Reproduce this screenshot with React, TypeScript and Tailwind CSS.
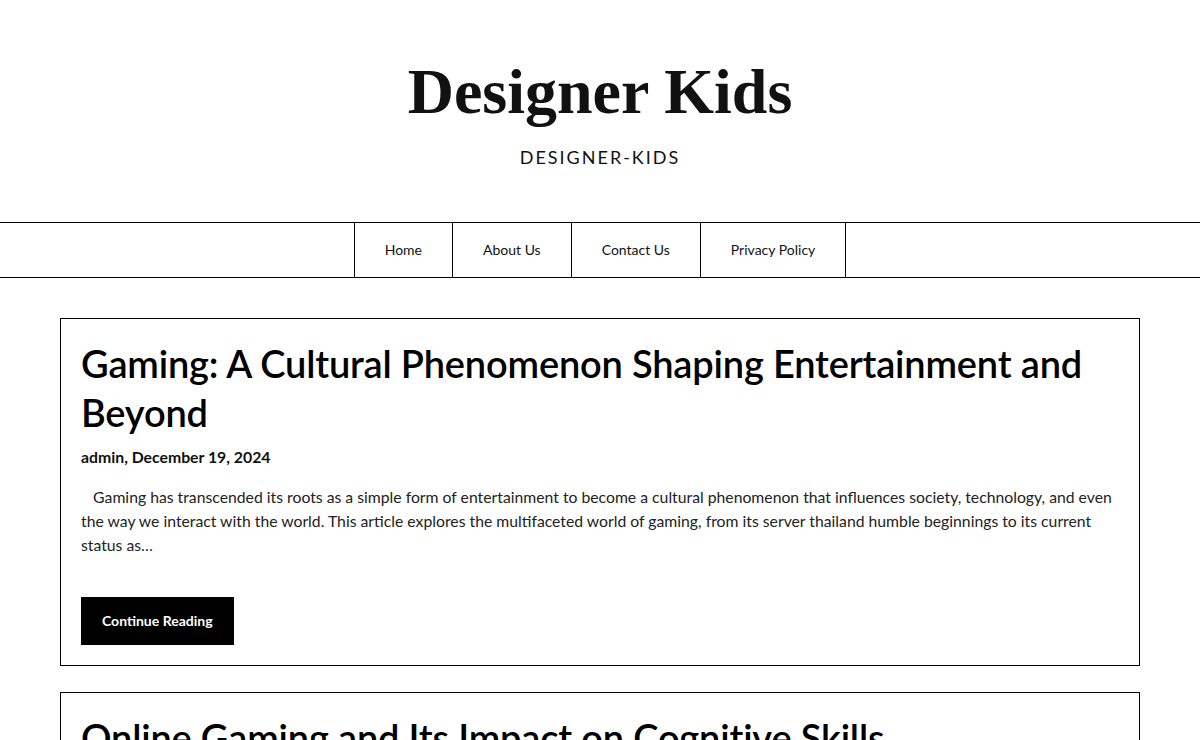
import React from "react";

const posts = [
  {
    title: "Gaming: A Cultural Phenomenon Shaping Entertainment and Beyond",
    meta: "admin, December 19, 2024",
    excerpt:
      "Gaming has transcended its roots as a simple form of entertainment to become a cultural phenomenon that influences society, technology, and even the way we interact with the world. This article explores the multifaceted world of gaming, from its server thailand humble beginnings to its current status as…",
  },
  {
    title: "Online Gaming and Its Impact on Cognitive Skills",
    meta: "admin, December 18, 2024",
    excerpt:
      "Online gaming has become a global phenomenon, attracting millions of players from different walks of life. While it is often viewed as a form of entertainment, research suggests that online gaming can have a significant impact on cognitive skills…",
  },
];

export default function App() {
  return (
    <div className="min-h-screen bg-white text-black" style={{ fontFamily: "Lato, 'Noto Sans', sans-serif" }}>
      <header className="flex flex-col items-center pt-[52px] pb-[53px]">
        <h1
          className="text-[64px] leading-[80px] font-bold text-[#111]"
          style={{ fontFamily: "'Liberation Serif', 'DejaVu Serif', serif" }}
        >
          Designer Kids
        </h1>
        <p className="mt-[13px] text-[18px] leading-[24px] tracking-[2px] text-[#111]">DESIGNER-KIDS</p>
      </header>
      <nav className="border-y border-black flex justify-center">
        <ul className="flex border-l border-black">
          {["Home", "About Us", "Contact Us", "Privacy Policy"].map((n) => (
            <li key={n} className="border-r border-black">
              <a className="block px-[30px] leading-[54px] text-[14px] text-[#111]">{n}</a>
            </li>
          ))}
        </ul>
      </nav>
      <main className="px-[60px] pt-[40px] flex flex-col gap-[26px]">
        {posts.map((p) => (
          <article key={p.title} className="border border-black px-[20px] pt-[20px] pb-[20px]">
            <h2 className="text-[38px] leading-[49px] font-semibold text-black tracking-[-0.18px]">{p.title}</h2>
            <div className="mt-[8px] text-[15.8px] leading-[24px] font-bold text-[#111]">{p.meta}</div>
            <p className="mt-[16px] text-[15.75px] leading-[24px] text-[#222]">
              {"\u00a0\u00a0 "}
              {p.excerpt}
            </p>
            <a className="mt-[40px] inline-block bg-black text-white text-[14px] font-bold px-[21px] leading-[48px]">
              Continue Reading
            </a>
          </article>
        ))}
      </main>
    </div>
  );
}
